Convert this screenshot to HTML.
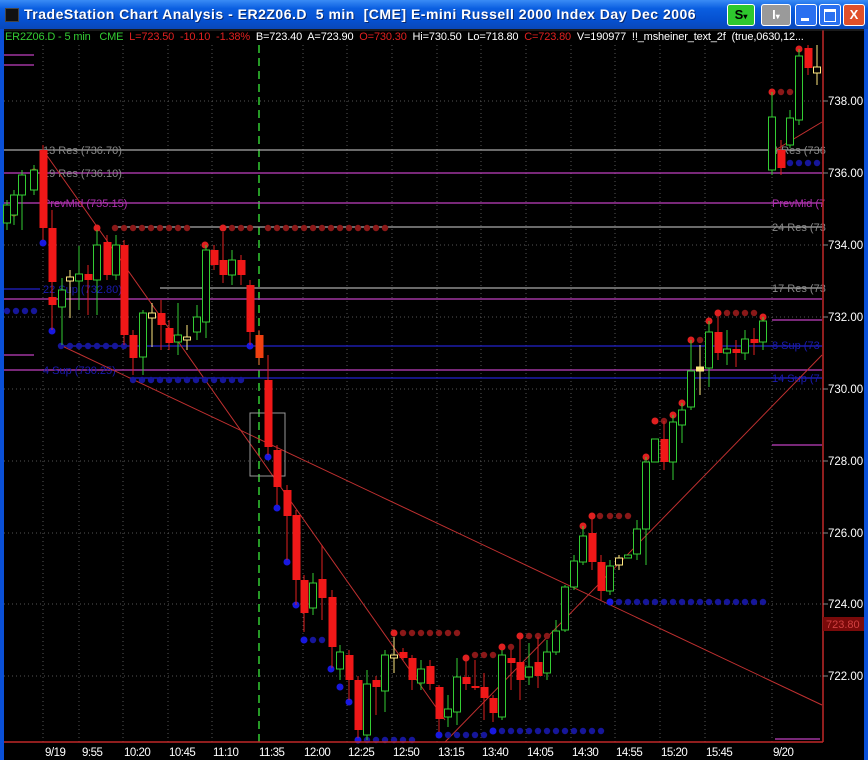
<!DOCTYPE html>
<html><head><meta charset="utf-8"><style>
html,body{margin:0;padding:0;width:868px;height:760px;overflow:hidden;background:#000}
.tb{position:absolute;left:0;top:0;width:868px;height:29px;background:linear-gradient(#3a8cf5,#0a5ee0 30%,#0550d0 70%,#0a48b8);}
.tt{position:absolute;left:24px;top:6px;color:#fff;font:bold 14px "Liberation Sans",sans-serif;white-space:pre;letter-spacing:0.5px;text-shadow:1px 1px #0a2a70}
.ic{position:absolute;left:5px;top:8px;width:12px;height:12px;background:#111;border:1px solid #444}
.bt{position:absolute;top:4px;height:20px;border:1px solid #fff;border-radius:3px;font:bold 13px "Liberation Sans",sans-serif;color:#fff;text-align:center;line-height:20px}
.fr{position:absolute;background:#0a50d8}
.hd{position:absolute;left:5px;top:31px;font:11px "Liberation Sans",sans-serif;white-space:pre;letter-spacing:-0.15px}
</style></head><body>
<div class="tb"><div class="ic"></div><div class="tt">TradeStation Chart Analysis - ER2Z06.D  5 min  [CME] E-mini Russell 2000 Index Day Dec 2006</div>
<div class="bt" style="left:727px;width:26px;background:#2ec82e;color:#000">S<span style="font-size:8px">▾</span></div>
<div class="bt" style="left:761px;width:28px;background:#9a9a9a">I<span style="font-size:8px">▾</span></div>
<div class="bt" style="left:795px;width:20px;background:#2a70f0"><div style="position:absolute;left:5px;top:13px;width:8px;height:3px;background:#fff"></div></div>
<div class="bt" style="left:819px;width:20px;background:#2a70f0"><div style="position:absolute;left:4px;top:4px;width:10px;height:9px;border:1px solid #fff;border-top-width:3px"></div></div>
<div class="bt" style="left:843px;width:20px;background:#e0502a">X</div>
</div>
<div class="fr" style="left:0;top:29px;width:4px;height:731px"></div>
<div class="fr" style="left:864px;top:29px;width:4px;height:731px"></div>
<svg style="position:absolute;left:0;top:0" width="868" height="760" font-family="Liberation Sans,sans-serif">
<g stroke="#555" stroke-dasharray="1,3" stroke-width="1">
<line x1="4" y1="101" x2="822" y2="101"/><line x1="4" y1="173" x2="822" y2="173"/><line x1="4" y1="245" x2="822" y2="245"/><line x1="4" y1="317" x2="822" y2="317"/><line x1="4" y1="389" x2="822" y2="389"/><line x1="4" y1="461" x2="822" y2="461"/><line x1="4" y1="533" x2="822" y2="533"/><line x1="4" y1="604" x2="822" y2="604"/><line x1="4" y1="676" x2="822" y2="676"/>
<line x1="43" y1="45" x2="43" y2="742"/><line x1="79" y1="45" x2="79" y2="742"/><line x1="123" y1="45" x2="123" y2="742"/><line x1="168" y1="45" x2="168" y2="742"/><line x1="212" y1="45" x2="212" y2="742"/><line x1="303" y1="45" x2="303" y2="742"/><line x1="347" y1="45" x2="347" y2="742"/><line x1="392" y1="45" x2="392" y2="742"/><line x1="437" y1="45" x2="437" y2="742"/><line x1="481" y1="45" x2="481" y2="742"/><line x1="526" y1="45" x2="526" y2="742"/><line x1="571" y1="45" x2="571" y2="742"/><line x1="615" y1="45" x2="615" y2="742"/><line x1="660" y1="45" x2="660" y2="742"/><line x1="705" y1="45" x2="705" y2="742"/><line x1="772" y1="45" x2="772" y2="742"/>
</g>
<line x1="259" y1="45" x2="259" y2="742" stroke="#3c3" stroke-dasharray="8,5" stroke-width="1.5"/>
<g stroke-width="1.3">
<line x1="4" y1="150" x2="822" y2="150" stroke="#aaa"/>
<line x1="4" y1="173" x2="822" y2="173" stroke="#c040c0"/>
<line x1="4" y1="203" x2="822" y2="203" stroke="#c040c0"/>
<line x1="115" y1="227" x2="822" y2="227" stroke="#aaa"/>
<line x1="160" y1="288" x2="822" y2="288" stroke="#aaa"/>
<line x1="4" y1="289" x2="40" y2="289" stroke="#22c"/>
<line x1="4" y1="299" x2="822" y2="299" stroke="#c040c0"/>
<line x1="60" y1="346" x2="822" y2="346" stroke="#22c"/>
<line x1="4" y1="370" x2="822" y2="370" stroke="#c040c0"/>
<line x1="130" y1="378" x2="822" y2="378" stroke="#22c"/>
<line x1="4" y1="55" x2="34" y2="55" stroke="#c040c0"/><line x1="4" y1="65" x2="34" y2="65" stroke="#c040c0"/><line x1="4" y1="355" x2="34" y2="355" stroke="#c040c0"/>
<line x1="772" y1="320" x2="822" y2="320" stroke="#c040c0"/><line x1="772" y1="445" x2="822" y2="445" stroke="#c040c0"/><line x1="775" y1="739" x2="820" y2="739" stroke="#c040c0"/>
</g>
<g font-size="11">
<text x="43" y="154" fill="#888">13 Res (736.70)</text>
<text x="43" y="177" fill="#888">19 Res (736.10)</text>
<text x="43" y="207" fill="#b030b0">PrevMid (735.15)</text>
<text x="43" y="293" fill="#1a1ab0">22 Sup (732.80)</text>
<text x="43" y="374" fill="#1a1ab0">4 Sup (730.25)</text>
<text x="772" y="154" fill="#888">4 Res (736</text>
<text x="772" y="207" fill="#b030b0">PrevMid (7</text>
<text x="772" y="231" fill="#888">24 Res (73</text>
<text x="772" y="292" fill="#888">17 Res (73</text>
<text x="772" y="349" fill="#1a1ab0">8 Sup (73</text>
<text x="772" y="382" fill="#1a1ab0">14 Sup (7</text>
</g>
<g stroke="#c03030" stroke-width="1">
<line x1="43" y1="150" x2="445" y2="720"/>
<line x1="60" y1="345" x2="822" y2="705"/>
<line x1="445" y1="742" x2="822" y2="355"/>
<line x1="772" y1="152" x2="822" y2="122"/>
</g>
<rect x="250" y="413" width="35" height="63" fill="none" stroke="#999"/>
<g fill="#8a1818">
<circle cx="115" cy="228" r="3.2"/><circle cx="124" cy="228" r="3.2"/><circle cx="133" cy="228" r="3.2"/><circle cx="142" cy="228" r="3.2"/><circle cx="151" cy="228" r="3.2"/><circle cx="160" cy="228" r="3.2"/><circle cx="169" cy="228" r="3.2"/><circle cx="178" cy="228" r="3.2"/><circle cx="187" cy="228" r="3.2"/><circle cx="232" cy="228" r="3.2"/><circle cx="241" cy="228" r="3.2"/><circle cx="250" cy="228" r="3.2"/><circle cx="268" cy="228" r="3.2"/><circle cx="277" cy="228" r="3.2"/><circle cx="286" cy="228" r="3.2"/><circle cx="295" cy="228" r="3.2"/><circle cx="304" cy="228" r="3.2"/><circle cx="313" cy="228" r="3.2"/><circle cx="322" cy="228" r="3.2"/><circle cx="331" cy="228" r="3.2"/><circle cx="340" cy="228" r="3.2"/><circle cx="349" cy="228" r="3.2"/><circle cx="358" cy="228" r="3.2"/><circle cx="367" cy="228" r="3.2"/><circle cx="376" cy="228" r="3.2"/><circle cx="385" cy="228" r="3.2"/>
<circle cx="403" cy="633" r="3.2"/><circle cx="412" cy="633" r="3.2"/><circle cx="421" cy="633" r="3.2"/><circle cx="430" cy="633" r="3.2"/><circle cx="439" cy="633" r="3.2"/><circle cx="448" cy="633" r="3.2"/><circle cx="457" cy="633" r="3.2"/>
<circle cx="475" cy="655" r="3.2"/><circle cx="484" cy="655" r="3.2"/><circle cx="493" cy="655" r="3.2"/><circle cx="511" cy="647" r="3.2"/><circle cx="529" cy="636" r="3.2"/><circle cx="538" cy="636" r="3.2"/><circle cx="547" cy="636" r="3.2"/>
<circle cx="600" cy="516" r="3.2"/><circle cx="610" cy="516" r="3.2"/><circle cx="619" cy="516" r="3.2"/><circle cx="628" cy="516" r="3.2"/><circle cx="664" cy="421" r="3.2"/><circle cx="700" cy="340" r="3.2"/>
<circle cx="727" cy="313" r="3.2"/><circle cx="736" cy="313" r="3.2"/><circle cx="745" cy="313" r="3.2"/><circle cx="754" cy="313" r="3.2"/><circle cx="781" cy="92" r="3.2"/><circle cx="790" cy="92" r="3.2"/>
</g>
<g fill="#e02020">
<circle cx="14" cy="213" r="3.5"/><circle cx="22" cy="190" r="3.5"/><circle cx="34" cy="172" r="3.5"/><circle cx="97" cy="228" r="3.5"/><circle cx="223" cy="228" r="3.5"/><circle cx="205" cy="245" r="3.5"/><circle cx="394" cy="633" r="3.5"/><circle cx="466" cy="658" r="3.5"/><circle cx="502" cy="647" r="3.5"/><circle cx="520" cy="636" r="3.5"/><circle cx="583" cy="526" r="3.5"/><circle cx="592" cy="516" r="3.5"/><circle cx="646" cy="457" r="3.5"/><circle cx="655" cy="421" r="3.5"/><circle cx="673" cy="415" r="3.5"/><circle cx="682" cy="403" r="3.5"/><circle cx="691" cy="340" r="3.5"/><circle cx="709" cy="321" r="3.5"/><circle cx="718" cy="313" r="3.5"/><circle cx="763" cy="317" r="3.5"/><circle cx="772" cy="92" r="3.5"/><circle cx="799" cy="49" r="3.5"/>
</g>
<g fill="#1818e0">
<circle cx="43" cy="243" r="3.5"/><circle cx="52" cy="331" r="3.5"/><circle cx="268" cy="457" r="3.5"/><circle cx="277" cy="508" r="3.5"/><circle cx="287" cy="562" r="3.5"/><circle cx="296" cy="605" r="3.5"/><circle cx="304" cy="640" r="3.5"/><circle cx="331" cy="669" r="3.5"/><circle cx="340" cy="687" r="3.5"/><circle cx="349" cy="702" r="3.5"/><circle cx="439" cy="735" r="3.5"/><circle cx="358" cy="740" r="3.5"/><circle cx="493" cy="731" r="3.5"/><circle cx="610" cy="602" r="3.5"/><circle cx="772" cy="163" r="3.5"/><circle cx="250" cy="346" r="3.5"/>
</g>
<g fill="#16169a">
<circle cx="7" cy="311" r="3.2"/><circle cx="16" cy="311" r="3.2"/><circle cx="25" cy="311" r="3.2"/><circle cx="34" cy="311" r="3.2"/>
<circle cx="61" cy="346" r="3.2"/><circle cx="70" cy="346" r="3.2"/><circle cx="79" cy="346" r="3.2"/><circle cx="88" cy="346" r="3.2"/><circle cx="97" cy="346" r="3.2"/><circle cx="106" cy="346" r="3.2"/><circle cx="115" cy="346" r="3.2"/><circle cx="124" cy="346" r="3.2"/>
<circle cx="133" cy="380" r="3.2"/><circle cx="142" cy="380" r="3.2"/><circle cx="151" cy="380" r="3.2"/><circle cx="160" cy="380" r="3.2"/><circle cx="169" cy="380" r="3.2"/><circle cx="178" cy="380" r="3.2"/><circle cx="187" cy="380" r="3.2"/><circle cx="196" cy="380" r="3.2"/><circle cx="205" cy="380" r="3.2"/><circle cx="214" cy="380" r="3.2"/><circle cx="223" cy="380" r="3.2"/><circle cx="232" cy="380" r="3.2"/><circle cx="241" cy="380" r="3.2"/>
<circle cx="313" cy="640" r="3.2"/><circle cx="322" cy="640" r="3.2"/>
<circle cx="367" cy="740" r="3.2"/><circle cx="376" cy="740" r="3.2"/><circle cx="385" cy="740" r="3.2"/><circle cx="394" cy="740" r="3.2"/><circle cx="403" cy="740" r="3.2"/><circle cx="412" cy="740" r="3.2"/><circle cx="448" cy="735" r="3.2"/><circle cx="457" cy="735" r="3.2"/><circle cx="466" cy="735" r="3.2"/><circle cx="475" cy="735" r="3.2"/><circle cx="484" cy="735" r="3.2"/>
<circle cx="502" cy="731" r="3.2"/><circle cx="511" cy="731" r="3.2"/><circle cx="520" cy="731" r="3.2"/><circle cx="529" cy="731" r="3.2"/><circle cx="538" cy="731" r="3.2"/><circle cx="547" cy="731" r="3.2"/><circle cx="556" cy="731" r="3.2"/><circle cx="565" cy="731" r="3.2"/><circle cx="574" cy="731" r="3.2"/><circle cx="583" cy="731" r="3.2"/><circle cx="592" cy="731" r="3.2"/><circle cx="601" cy="731" r="3.2"/>
<circle cx="619" cy="602" r="3.2"/><circle cx="628" cy="602" r="3.2"/><circle cx="637" cy="602" r="3.2"/><circle cx="646" cy="602" r="3.2"/><circle cx="655" cy="602" r="3.2"/><circle cx="664" cy="602" r="3.2"/><circle cx="673" cy="602" r="3.2"/><circle cx="682" cy="602" r="3.2"/><circle cx="691" cy="602" r="3.2"/><circle cx="700" cy="602" r="3.2"/><circle cx="709" cy="602" r="3.2"/><circle cx="718" cy="602" r="3.2"/><circle cx="727" cy="602" r="3.2"/><circle cx="736" cy="602" r="3.2"/><circle cx="745" cy="602" r="3.2"/><circle cx="754" cy="602" r="3.2"/><circle cx="763" cy="602" r="3.2"/>
<circle cx="781" cy="163" r="3.2"/><circle cx="790" cy="163" r="3.2"/><circle cx="799" cy="163" r="3.2"/><circle cx="808" cy="163" r="3.2"/><circle cx="817" cy="163" r="3.2"/>
</g>
<g stroke-width="1">
<g stroke="#e02020">
<line x1="43" y1="145" x2="43" y2="240"/><line x1="52" y1="210" x2="52" y2="330"/><line x1="88" y1="265" x2="88" y2="315"/><line x1="107" y1="235" x2="107" y2="280"/><line x1="124" y1="240" x2="124" y2="345"/><line x1="133" y1="330" x2="133" y2="375"/><line x1="161" y1="300" x2="161" y2="350"/><line x1="169" y1="320" x2="169" y2="350"/><line x1="214" y1="245" x2="214" y2="270"/><line x1="223" y1="232" x2="223" y2="283"/><line x1="241" y1="255" x2="241" y2="285"/><line x1="250" y1="280" x2="250" y2="345"/><line x1="259" y1="330" x2="259" y2="365"/><line x1="268" y1="355" x2="268" y2="455"/><line x1="277" y1="445" x2="277" y2="505"/><line x1="287" y1="485" x2="287" y2="560"/><line x1="296" y1="510" x2="296" y2="605"/><line x1="304" y1="575" x2="304" y2="632"/><line x1="322" y1="545" x2="322" y2="620"/><line x1="332" y1="590" x2="332" y2="668"/><line x1="349" y1="650" x2="349" y2="700"/><line x1="358" y1="676" x2="358" y2="738"/><line x1="376" y1="676" x2="376" y2="715"/><line x1="403" y1="648" x2="403" y2="660"/><line x1="412" y1="655" x2="412" y2="690"/><line x1="430" y1="660" x2="430" y2="690"/><line x1="439" y1="685" x2="439" y2="732"/><line x1="466" y1="660" x2="466" y2="690"/><line x1="475" y1="660" x2="475" y2="690"/><line x1="484" y1="673" x2="484" y2="720"/><line x1="493" y1="695" x2="493" y2="722"/><line x1="511" y1="650" x2="511" y2="690"/><line x1="520" y1="637" x2="520" y2="700"/><line x1="538" y1="637" x2="538" y2="688"/><line x1="592" y1="516" x2="592" y2="570"/><line x1="601" y1="555" x2="601" y2="600"/><line x1="664" y1="421" x2="664" y2="470"/><line x1="718" y1="313" x2="718" y2="360"/><line x1="736" y1="340" x2="736" y2="367"/><line x1="754" y1="328" x2="754" y2="355"/><line x1="781" y1="140" x2="781" y2="175"/><line x1="808" y1="45" x2="808" y2="75"/>
</g>
<g stroke="#3c3">
<line x1="7" y1="200" x2="7" y2="230"/><line x1="14" y1="190" x2="14" y2="225"/><line x1="22" y1="170" x2="22" y2="230"/><line x1="34" y1="165" x2="34" y2="195"/><line x1="62" y1="278" x2="62" y2="345"/><line x1="79" y1="246" x2="79" y2="310"/><line x1="97" y1="230" x2="97" y2="315"/><line x1="116" y1="235" x2="116" y2="280"/><line x1="143" y1="310" x2="143" y2="375"/><line x1="178" y1="303" x2="178" y2="355"/><line x1="197" y1="305" x2="197" y2="340"/><line x1="206" y1="245" x2="206" y2="338"/><line x1="232" y1="250" x2="232" y2="285"/><line x1="313" y1="573" x2="313" y2="615"/><line x1="340" y1="645" x2="340" y2="680"/><line x1="367" y1="670" x2="367" y2="740"/><line x1="385" y1="650" x2="385" y2="712"/><line x1="421" y1="660" x2="421" y2="690"/><line x1="448" y1="695" x2="448" y2="727"/><line x1="457" y1="658" x2="457" y2="725"/><line x1="502" y1="650" x2="502" y2="720"/><line x1="529" y1="643" x2="529" y2="685"/><line x1="547" y1="640" x2="547" y2="680"/><line x1="556" y1="620" x2="556" y2="655"/><line x1="565" y1="585" x2="565" y2="632"/><line x1="574" y1="555" x2="574" y2="590"/><line x1="583" y1="526" x2="583" y2="565"/><line x1="610" y1="560" x2="610" y2="595"/><line x1="637" y1="520" x2="637" y2="560"/><line x1="646" y1="457" x2="646" y2="565"/><line x1="673" y1="415" x2="673" y2="480"/><line x1="682" y1="403" x2="682" y2="443"/><line x1="691" y1="340" x2="691" y2="410"/><line x1="709" y1="321" x2="709" y2="387"/><line x1="727" y1="330" x2="727" y2="365"/><line x1="745" y1="330" x2="745" y2="360"/><line x1="763" y1="317" x2="763" y2="350"/><line x1="772" y1="92" x2="772" y2="175"/><line x1="790" y1="110" x2="790" y2="148"/><line x1="799" y1="49" x2="799" y2="125"/>
</g>
<g stroke="#ffe880">
<line x1="70" y1="270" x2="70" y2="318"/><line x1="152" y1="303" x2="152" y2="347"/><line x1="187" y1="325" x2="187" y2="350"/><line x1="394" y1="637" x2="394" y2="673"/><line x1="619" y1="555" x2="619" y2="570"/><line x1="700" y1="345" x2="700" y2="395"/><line x1="817" y1="45" x2="817" y2="85"/>
</g>
</g>
<g fill="#f01818">
<rect x="39.5" y="150" width="8" height="78"/><rect x="48.5" y="228" width="8" height="54"/><rect x="48.5" y="297" width="8" height="8"/><rect x="84.5" y="274" width="8" height="6"/><rect x="103.5" y="242" width="8" height="33"/><rect x="120.5" y="245" width="8" height="90"/><rect x="129.5" y="335" width="8" height="23"/><rect x="157.5" y="313" width="8" height="12"/><rect x="165.5" y="328" width="8" height="15"/><rect x="210.5" y="250" width="8" height="15"/><rect x="219.5" y="260" width="8" height="15"/><rect x="237.5" y="260" width="8" height="15"/><rect x="246.5" y="285" width="8" height="47"/><rect x="255.5" y="335" width="8" height="23" fill="#f04010"/><rect x="264.5" y="380" width="8" height="67"/><rect x="273.5" y="450" width="8" height="37"/><rect x="283.5" y="490" width="8" height="26"/><rect x="292.5" y="515" width="8" height="65"/><rect x="300.5" y="580" width="8" height="33"/><rect x="318.5" y="579" width="8" height="19"/><rect x="328.5" y="597" width="8" height="50"/><rect x="345.5" y="655" width="8" height="25"/><rect x="354.5" y="680" width="8" height="50"/><rect x="372.5" y="680" width="8" height="7"/><rect x="399.5" y="652" width="8" height="6"/><rect x="408.5" y="658" width="8" height="22"/><rect x="426.5" y="666" width="8" height="18"/><rect x="435.5" y="687" width="8" height="32"/><rect x="462.5" y="677" width="8" height="7"/><rect x="471.5" y="686" width="8" height="2"/><rect x="480.5" y="687" width="8" height="11"/><rect x="489.5" y="698" width="8" height="15"/><rect x="507.5" y="658" width="8" height="5"/><rect x="516.5" y="662" width="8" height="18"/><rect x="534.5" y="662" width="8" height="14"/><rect x="588.5" y="533" width="8" height="29"/><rect x="597.5" y="562" width="8" height="29"/><rect x="660.5" y="439" width="8" height="23"/><rect x="714.5" y="332" width="8" height="21"/><rect x="732.5" y="349" width="8" height="4"/><rect x="750.5" y="339" width="8" height="4"/><rect x="777.5" y="150" width="8" height="18"/><rect x="804.5" y="48" width="8" height="20"/>
</g>
<g fill="#000" stroke="#3c3" stroke-width="1">
<rect x="3.5" y="205" width="7" height="18"/><rect x="10.5" y="195" width="7" height="20"/><rect x="18.5" y="175" width="7" height="20"/><rect x="30.5" y="170" width="7" height="20"/><rect x="58.5" y="290" width="7" height="17"/><rect x="75.5" y="274" width="7" height="7"/><rect x="93.5" y="245" width="7" height="35"/><rect x="112.5" y="245" width="7" height="30"/><rect x="139.5" y="313" width="7" height="44"/><rect x="174.5" y="335" width="7" height="7"/><rect x="193.5" y="317" width="7" height="15"/><rect x="202.5" y="250" width="7" height="72"/><rect x="228.5" y="260" width="7" height="15"/><rect x="309.5" y="583" width="7" height="25"/><rect x="336.5" y="652" width="7" height="17"/><rect x="363.5" y="684" width="7" height="51"/><rect x="381.5" y="655" width="7" height="36"/><rect x="417.5" y="669" width="7" height="14"/><rect x="444.5" y="709" width="7" height="8"/><rect x="453.5" y="677" width="7" height="35"/><rect x="498.5" y="655" width="7" height="62"/><rect x="525.5" y="667" width="7" height="10"/><rect x="543.5" y="652" width="7" height="21"/><rect x="552.5" y="631" width="7" height="21"/><rect x="561.5" y="587" width="7" height="43"/><rect x="570.5" y="561" width="7" height="26"/><rect x="579.5" y="536" width="7" height="26"/><rect x="606.5" y="566" width="7" height="25"/><rect x="624.5" y="555" width="7" height="3"/><rect x="633.5" y="529" width="7" height="25"/><rect x="642.5" y="462" width="7" height="67"/><rect x="651.5" y="439" width="7" height="23"/><rect x="669.5" y="422" width="7" height="40"/><rect x="678.5" y="410" width="7" height="15"/><rect x="687.5" y="371" width="7" height="36"/><rect x="705.5" y="332" width="7" height="36"/><rect x="723.5" y="349" width="7" height="4"/><rect x="741.5" y="339" width="7" height="14"/><rect x="759.5" y="321" width="7" height="21"/><rect x="768.5" y="117" width="7" height="53"/><rect x="786.5" y="118" width="7" height="27"/><rect x="795.5" y="56" width="7" height="64"/>
</g>
<g fill="#000" stroke="#ffe880" stroke-width="1">
<rect x="66.5" y="277" width="7" height="4"/><rect x="148.5" y="313" width="7" height="5"/><rect x="183.5" y="337" width="7" height="3"/><rect x="390.5" y="655" width="7" height="3"/><rect x="615.5" y="558" width="7" height="7"/><rect x="696.5" y="367" width="7" height="4" fill="#ffe880"/><rect x="813.5" y="67" width="7" height="6"/>
</g>
<line x1="823" y1="30" x2="823" y2="742" stroke="#c02828" stroke-width="1.5"/>
<line x1="4" y1="742" x2="823" y2="742" stroke="#c02828" stroke-width="1.5"/>
<line x1="4" y1="30" x2="864" y2="30" stroke="#333"/>
<g stroke="#888"><line x1="823" y1="101" x2="828" y2="101"/><line x1="823" y1="173" x2="828" y2="173"/><line x1="823" y1="245" x2="828" y2="245"/><line x1="823" y1="317" x2="828" y2="317"/><line x1="823" y1="389" x2="828" y2="389"/><line x1="823" y1="461" x2="828" y2="461"/><line x1="823" y1="533" x2="828" y2="533"/><line x1="823" y1="604" x2="828" y2="604"/><line x1="823" y1="676" x2="828" y2="676"/></g>
<g fill="#fff" font-size="11.5">
<text x="828" y="105">738.00</text><text x="828" y="177">736.00</text><text x="828" y="249">734.00</text><text x="828" y="321">732.00</text><text x="828" y="393">730.00</text><text x="828" y="465">728.00</text><text x="828" y="537">726.00</text><text x="828" y="608">724.00</text><text x="828" y="680">722.00</text>
</g>
<rect x="823" y="617" width="41" height="14" fill="#7a0a0a"/>
<text x="826" y="628" fill="#d04040" font-size="11">723.80</text>
<g fill="#fff" font-size="11.5" letter-spacing="-0.5">
<text x="45" y="756">9/19</text><text x="82" y="756">9:55</text><text x="124" y="756">10:20</text><text x="169" y="756">10:45</text><text x="213" y="756">11:10</text><text x="259" y="756">11:35</text><text x="304" y="756">12:00</text><text x="348" y="756">12:25</text><text x="393" y="756">12:50</text><text x="438" y="756">13:15</text><text x="482" y="756">13:40</text><text x="527" y="756">14:05</text><text x="572" y="756">14:30</text><text x="616" y="756">14:55</text><text x="661" y="756">15:20</text><text x="706" y="756">15:45</text><text x="773" y="756">9/20</text>
</g>
</svg>
<div class="hd"><span style="color:#3c3">ER2Z06.D - 5 min   CME  </span><span style="color:#e02020">L=723.50  -10.10  -1.38%  </span><span style="color:#fff">B=723.40  A=723.90  </span><span style="color:#e02020">O=730.30  </span><span style="color:#fff">Hi=730.50  Lo=718.80  </span><span style="color:#e02020">C=723.80  </span><span style="color:#fff">V=190977  !!_msheiner_text_2f  (true,0630,12...</span></div>
</body></html>
